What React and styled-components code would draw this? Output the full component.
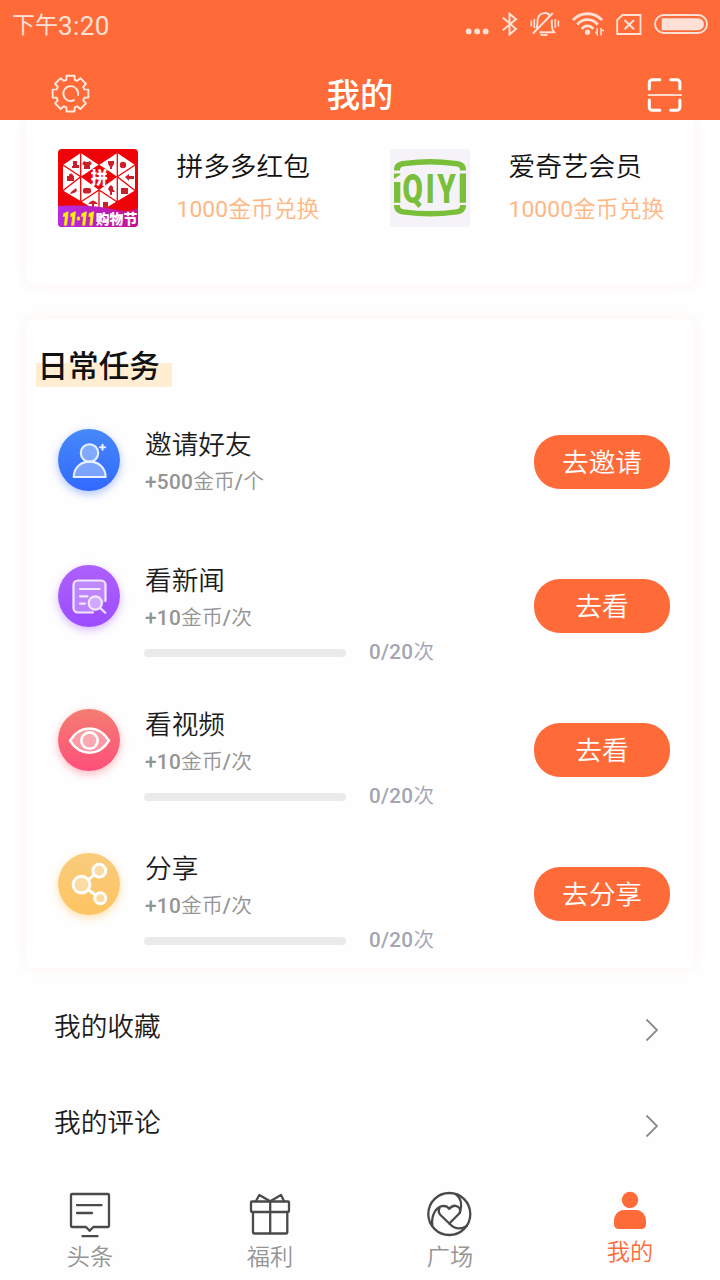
import React from 'react'
import styled, { createGlobalStyle } from 'styled-components'

const GlobalStyle = createGlobalStyle`
    * {
        box-sizing: border-box;
    }
    body {
        margin: 0;
        background: #fefefe;
        font-family: Roboto, 'Noto Sans CJK SC', sans-serif;
        font-weight: 350;
    }
`
const Page = styled.div`
    display: flex;
    flex-direction: column;
    width: 720px;
    height: 1280px;
    overflow: hidden;
`
const Header = styled.header`
    flex: none;
    height: 120px;
    background: #ff6b38;
    color: #fff;
    position: relative;
    z-index: 1;
`
const StatusBar = styled.div`
    display: flex;
    justify-content: space-between;
    height: 48px;
    padding: 12px 12px 0 12px;
    color: #ffe1d7;
`
const Clock = styled.div`
    display: flex;
    align-items: center;
    height: 28px;
    font-size: 26px;
    font-weight: 400;
    letter-spacing: 0.4px;
`
const ClockPeriod = styled.span`
    font-size: 23px;
    line-height: 26px;
    letter-spacing: 0;
`
const StatusIcons = styled.div`
    display: flex;
    gap: 12px;

    svg {
        display: block;
    }
`
const NavBar = styled.div`
    display: grid;
    grid-template-columns: 1fr auto 1fr;
    align-items: center;
    height: 72px;
    padding: 20px 37px 0 51px;

    svg {
        display: block;
    }
    svg:last-child {
        justify-self: end;
    }
`
const NavTitle = styled.h1`
    margin: 3px 0 0 -14px;
    font-size: 33.3px;
    line-height: 40px;
    font-weight: 500;
`
const Card = styled.section`
    flex: none;
    margin: 0 26px;
    border-radius: 8px;
    background: #fefefe;
    box-shadow: 0 0 12px rgba(255, 107, 56, 0.08);
`
const RewardCard = styled(Card)`
    display: grid;
    grid-template-columns: 332px 1fr;
    height: 165px;
    padding: 29px 0 0 32px;
    border-radius: 0 0 8px 8px;
`
const Reward = styled.div`
    display: flex;
    gap: 38.5px;

    svg {
        flex: none;
        display: block;
        border-radius: 4px;
    }
`
const RewardName = styled.div`
    margin-top: 1px;
    font-size: 26.7px;
    line-height: 34px;
    color: #111;
    white-space: nowrap;
`
const RewardCost = styled.div`
    margin-top: 9px;
    font-size: 22.8px;
    line-height: 34px;
    color: #ffb783;
    white-space: nowrap;
`
const CostDigits = styled.span`
    font-weight: 400;
    letter-spacing: 0.1px;
`
const TaskCard = styled(Card)`
    height: 649px;
    margin-top: 34px;
    padding: 27px 24px 0 10px;
`
const TaskHeading = styled.h2`
    width: 136px;
    height: 41px;
    margin: 0 0 42px;
    padding: 1px 0 0 1.5px;
    font-size: 30.6px;
    line-height: 40px;
    font-weight: 500;
    color: #111;
    white-space: nowrap;
    background: linear-gradient(#ffeed2, #ffeed2) 0 100% / 100% 24px no-repeat;
`
const TaskRow = styled.div`
    display: flex;
    align-items: flex-start;
    height: ${(props) => (props.$compact ? 136 : 144)}px;
    padding-left: 22px;
`
const TaskBadge = styled.div`
    flex: none;
    width: 62px;
    height: 62px;
    border-radius: 50%;
    background: linear-gradient(${(props) => props.$from}, ${(props) => props.$to});
    box-shadow: 0 3px 8px ${(props) => props.$glow};

    svg {
        display: block;
    }
`
const TaskInfo = styled.div`
    flex: 1;
    padding-left: 25px;
`
const TaskName = styled.div`
    padding-top: 1px;
    font-size: 26.7px;
    line-height: 30px;
    color: #1c1c1c;
`
const TaskReward = styled.div`
    margin-top: 7px;
    font-size: 20.8px;
    line-height: 30px;
    color: #949494;
`
const Digits = styled.span`
    font-weight: 500;
    letter-spacing: 0.3px;
`
const Progress = styled.div`
    display: flex;
    align-items: center;
    gap: 23px;
    height: 30px;
    margin: 5px 0 0 -1px;
`
const Track = styled.div`
    width: 202px;
    height: 8px;
    border-radius: 4px;
    background: #eaeaea;
    overflow: hidden;
`
const Fill = styled.div`
    height: 100%;
    background: #ff6b38;
`
const Count = styled.div`
    font-size: 20.6px;
    line-height: 30px;
    margin-top: -2px;
    color: #a3a6b1;
`
const TaskButton = styled.button`
    flex: none;
    width: 136px;
    height: 54px;
    margin: ${(props) => (props.$compact ? 6 : 14)}px 0 0;
    padding: 2px 0 0;
    border: 0;
    border-radius: 26px;
    background: #ff6b38;
    color: #fff;
    font: inherit;
    font-size: 26.7px;
    line-height: 52px;
`
const Links = styled.nav`
    flex: none;
    margin-top: 10px;
`
const LinkRow = styled.div`
    display: flex;
    justify-content: space-between;
    align-items: flex-start;
    height: 96px;
    padding: 31px 61px 0 54px;
    font-size: 26.7px;
    line-height: 36px;
    color: #1c1c1c;

    svg {
        display: block;
        margin-top: 9px;
    }
`
const TabBar = styled.footer`
    flex: none;
    display: grid;
    grid-template-columns: repeat(4, 1fr);
    margin-top: 20px;
`
const Tab = styled.div`
    display: flex;
    flex-direction: column;
    align-items: center;
    font-size: 23.2px;
    line-height: 30px;
    color: ${(props) => (props.$active ? '#ff6b38' : '#949494')};

    svg {
        display: block;
        margin-bottom: ${(props) => (props.$active ? -3 : 2)}px;
    }
`

const gearPath = () => {
  const points = []
  for (let i = 0; i < 8; i++) {
    const mid = i * 45 - 90
    const corners = [[-17, 14.4], [-12.5, 18.3], [12.5, 18.3], [17, 14.4]]
    corners.forEach(([angle, r]) => {
      const rad = ((mid + angle) * Math.PI) / 180
      points.push(`${(19.5 + r * Math.cos(rad)).toFixed(2)} ${(19.6 + r * Math.sin(rad)).toFixed(2)}`)
    })
  }
  return `M${points.join('L')}Z`
}

const GearIcon = () => (
  <svg width="40" height="40" viewBox="0 0 40 40" fill="none" stroke="#ffe9e1" strokeWidth="1.9" strokeLinejoin="round" strokeLinecap="round">
    <path d={gearPath()} />
    <path d="M27 21A7.400 7.400 0 1 0 23 26.200" />
  </svg>
)

const ScanIcon = () => (
  <svg width="36" height="36" viewBox="0 0 36 36" fill="none" stroke="#fff" strokeWidth="3" strokeLinecap="round">
    <path d="M2.300 13V6.800a3 3 0 0 1 3-3H12.800M23.800 3.800h6.100a3 3 0 0 1 3 3V13M32.900 24v7.300a3 3 0 0 1-3 3H23.800M12.800 34.300H5.300a3 3 0 0 1-3-3V24" />
    <path d="M.8 19h34" strokeWidth="2" strokeLinecap="butt" opacity="0.75" />
  </svg>
)

const DotsIcon = () => (
  <svg width="25" height="24" fill="currentColor">
    <circle cx="3.7" cy="19.4" r="2.9" />
    <circle cx="12.2" cy="19.4" r="2.9" />
    <circle cx="20.7" cy="19.4" r="2.9" />
  </svg>
)

const BluetoothIcon = () => (
  <svg width="16" height="24" fill="none" stroke="currentColor" strokeWidth="2">
    <path d="M.8 5.500L14 17 7.500 22.500V1.800L14 7.200.8 18.300" />
  </svg>
)

const MutedBellIcon = () => (
  <svg width="30" height="24" fill="none" stroke="currentColor" strokeWidth="1.9">
    <path d="M6 16.500C7.200 15 7.500 13.500 7.500 9.500C7.500 -.5 17.500 -.5 20 4M21.800 7.500V13C21.800 17 22.500 18.500 24 20.200H9.500" />
    <path d="M3 21.500L22.800 1" />
    <path d="M10.500 22.400q3.500 1.600 7 0" />
    <path d="M1.300 8.500v6M4.300 7v9M25.300 7v9M28.400 8.500v6" strokeWidth="1.6" />
  </svg>
)

const WifiIcon = () => (
  <svg width="32" height="24" fill="none" stroke="currentColor" strokeWidth="2.8">
    <path d="M1 8.200C8.500-.400 22.500-.400 30 8.200" />
    <path d="M5.300 12.500C11 6 20 6 25.700 12.500" />
    <path d="M9.800 16.800C13 13 18 13 21.200 16.800" />
    <circle cx="15.5" cy="20.2" r="2.6" fill="currentColor" stroke="none" />
    <path d="M25.200 16v7.500M29 16v7.500M23 20.500h2.500M29 18.500h3" strokeWidth="1.5" />
  </svg>
)

const SimIcon = () => (
  <svg width="26" height="24" fill="none" stroke="currentColor" strokeWidth="1.8">
    <path d="M6.500 3H24.500V22H1.200V8Z" />
    <path d="M8.500 8l9.500 9.200M18 8l-9.500 9.200" strokeWidth="2" />
  </svg>
)

const BatteryIcon = () => (
  <svg width="54" height="24">
    <rect x="1" y="3" width="52" height="18" rx="9" fill="none" stroke="currentColor" strokeWidth="1.9" />
    <path d="M7.700 6.200H44a6 6 0 0 1 0 12H7.700Z" fill="currentColor" />
  </svg>
)

const PddLogo = () => (
  <svg width="80" height="78" viewBox="0 0 80 78">
    <defs>
      <linearGradient id="pddBand" x1="0" x2="1">
        <stop offset="0" stopColor="#b52be6" />
        <stop offset="1" stopColor="#c6128f" />
      </linearGradient>
    </defs>
    <rect width="80" height="78" fill="#ee0408" />
    <path d="M22.700 4L41 16 59.300 4 77 16V41.500L41 63 5 41.500V16Z" fill="#fff" />
    <path d="M22.700 27.700L41 15.500 59.300 27.700 41 41Z" fill="#ee0408" />
    <g stroke="#ee0408" strokeWidth="1.3" fill="none">
      <path d="M22.700 3V53M59.300 3V53M5 16l17.700 11.700L5 41.500M77 16L59.300 27.700 77 41.500M22.700 53L41 41l18.300 12M41 41v22" />
    </g>
    <g fill="#c9202a">
      <path d="M15 12h4v4h2v3h-7v-2h1zM26 12l2 1h2l2-1 2 3-2 1v4h-6v-4l-2-1zM50 12h6v3l-2 3v2h-2v-2l-2-3zM67 28l4-3v2h5v3h-5v2zM51 38l2-2 2 2v2l2 3h-3v3h-2v-3l-2-3zM63 39h7v6h-7zM13 43l5-4 1 3-3 2-4 1zM9 27h7v5H9zM30 55q5-7 10 0h-4v4h-2v-4zM45 53h5v6h-5z" />
      <circle cx="65" cy="16" r="3.2" />
      <rect x="25" y="39" width="8" height="5.5" rx="2" />
      <rect x="11" y="24.5" width="4" height="4" rx="2" />
    </g>
    <text x="41.3" y="34.8" textAnchor="middle" fontSize="17" fontWeight="900" fontFamily="'Noto Sans CJK SC', sans-serif" fill="#fff">拼</text>
    <path d="M0 57Q34 55 54 60T80 58V78H0Z" fill="url(#pddBand)" />
    <text transform="translate(4 75.500) scale(.67 1)" fontSize="19" fontWeight="900" fontStyle="italic" fill="#fff200" stroke="#fff200" strokeWidth="1">11·11</text>
    <text x="37.8" y="74.8" fontSize="13.8" fontWeight="900" fontFamily="'Noto Sans CJK SC', sans-serif" fill="#fff">购物节</text>
  </svg>
)

const IqiyiLogo = () => (
  <svg width="80" height="78" viewBox="0 0 80 78">
    <rect width="80" height="78" fill="#f5f3f7" />
    <g fill="#7abf3a">
      <path d="M4 21.500C4 14 8 12.500 15 11.700Q40 8.500 65 11.700C72 12.500 76 14 76 21.500H70C70 18.500 69 17.800 65 17.200Q40 14 15 17.200C11 17.800 10 18.500 10 21.500Z" />
      <path d="M4 56C4 63 8 65 15 65.800Q40 69 65 65.800C72 65 76 63 76 56H70C70 59 69 60 65 60.500Q40 63.500 15 60.500C11 60 10 59 10 56Z" />
      <path d="M4 24.500h6.300v1.500Q7 27.500 4 30zM4 33h6.300v20.800H4zM69.700 24.500H76V53.800h-6.300z" />
      <text transform="translate(12.500 53.500) scale(.72 1)" fontSize="41" fontWeight="900" fontFamily="Roboto, sans-serif" letterSpacing="4">QIY</text>
    </g>
  </svg>
)

const lineProps = {
  width: 62,
  height: 62,
  fill: 'none',
  stroke: '#fff',
  strokeLinecap: 'round',
  strokeLinejoin: 'round',
}

const InviteIcon = () => (
  <svg {...lineProps} strokeWidth="2.1" stroke="#e9f0ff">
    <circle cx="31.5" cy="24" r="8.7" fill="rgba(255,255,255,.35)" />
    <path d="M15.700 48C16 27.500 47.400 27.500 47.700 48Z" fill="rgba(255,255,255,.35)" />
    <path d="M44.500 15.800v5M42 18.300h5" />
  </svg>
)

const NewsIcon = () => (
  <svg {...lineProps} strokeWidth="2.2" stroke="#f3e6ff">
    <path d="M47.500 36V20a4.500 4.500 0 0 0-4.500-4.500H20a4.500 4.500 0 0 0-4.500 4.500V43a4.500 4.500 0 0 0 4.500 4.500H35" fill="rgba(255,255,255,.28)" />
    <path d="M22 24h19.500M22 31.300h7.500M22 38.600h5" />
    <circle cx="37.3" cy="38" r="6.6" fill="rgba(255,255,255,.3)" />
    <path d="M42.500 43.200L47.300 47.700" />
  </svg>
)

const EyeIcon = () => (
  <svg {...lineProps} strokeWidth="2.6">
    <path d="M12 31.600C22 15.500 41 15.500 51 31.600 41 47.700 22 47.700 12 31.600Z" fill="rgba(255,255,255,.35)" />
    <circle cx="31.5" cy="31.6" r="8.2" fill="rgba(255,255,255,.15)" />
  </svg>
)

const ShareIcon = () => (
  <svg {...lineProps} strokeWidth="2.9">
    <g fill="rgba(255,255,255,.35)">
      <circle cx="23.5" cy="31.6" r="8.4" />
      <circle cx="41.3" cy="17.7" r="6.4" />
      <circle cx="42.3" cy="45.3" r="5.5" />
    </g>
    <path d="M30.500 26.500L36 22M30.500 37L37.500 42" />
  </svg>
)

const Chevron = () => (
  <svg width="14" height="24" fill="none" stroke="#8c8c8c" strokeWidth="1.8">
    <path d="M1.500 1.500L12 12 1.500 22.500" />
  </svg>
)

const tabProps = {
  width: 48,
  height: 50,
  fill: 'none',
  stroke: '#4a4a4a',
  strokeWidth: 2.3,
  strokeLinecap: 'round',
  strokeLinejoin: 'round',
}

const HeadlineIcon = () => (
  <svg {...tabProps}>
    <path d="M6 4H42a1 1 0 0 1 1 1V36a1 1 0 0 1-1 1H27.300L23.700 40.800 20 37H6a1 1 0 0 1-1-1V5a1 1 0 0 1 1-1Z" />
    <path d="M11 15.200H35.500M11 23H26M16.500 46.200H31.500" />
  </svg>
)

const GiftIcon = () => (
  <svg {...tabProps}>
    <rect x="5" y="11.5" width="38" height="10.5" rx="1" />
    <path d="M7 22V42.500a1 1 0 0 0 1 1H40.300a1 1 0 0 0 1-1V22M24.200 11.500V43.500" />
    <path d="M10 11L13.300 5 24.200 11.200 35 5 38 11" />
  </svg>
)

const SquareIcon = () => (
  <svg {...tabProps}>
    <circle cx="23.3" cy="24" r="21" />
    <path d="M6.300 35.500C5 25 10.500 16 17.500 15.800 20.500 15.800 22 17 23.300 18.800 25 16.500 27.500 15.600 29.700 15.800 33.500 16.500 35.500 20 33.500 23.300L23.300 33.500 14.500 25C12.700 23 12.300 20.500 13.500 18.200" />
    <path d="M30 4.300C35 8 36.500 15 33.800 22.500M23.300 33.500C28.500 39 35 39.500 40.800 36" />
  </svg>
)

const ProfileIcon = () => (
  <svg width="48" height="50" fill="#ff6b38">
    <circle cx="24" cy="10" r="8.2" />
    <path d="M18 20H30C36 20 40 25 40 31V34.500a4.500 4.500 0 0 1-4.500 4.500H12.500A4.500 4.500 0 0 1 8 34.500V31C8 25 12 20 18 20Z" />
  </svg>
)

const rewards = [
  { name: '拼多多红包', cost: 1000, Logo: PddLogo },
  { name: '爱奇艺会员', cost: 10000, Logo: IqiyiLogo },
]

const tasks = [
  { name: '邀请好友', amount: 500, per: '个', action: '去邀请', Icon: InviteIcon, from: '#4688f8', to: '#3169ff', glow: 'rgba(49,105,255,.4)' },
  { name: '看新闻', amount: 10, per: '次', action: '去看', done: 0, total: 20, Icon: NewsIcon, from: '#ad60fc', to: '#9c4dff', glow: 'rgba(156,77,255,.4)' },
  { name: '看视频', amount: 10, per: '次', action: '去看', done: 0, total: 20, Icon: EyeIcon, from: '#f47d70', to: '#ff4f7b', glow: 'rgba(255,79,100,.4)' },
  { name: '分享', amount: 10, per: '次', action: '去分享', done: 0, total: 20, Icon: ShareIcon, from: '#f9cc7d', to: '#ffc462', glow: 'rgba(255,190,80,.45)' },
]

const tabs = [
  { label: '头条', Icon: HeadlineIcon },
  { label: '福利', Icon: GiftIcon },
  { label: '广场', Icon: SquareIcon },
  { label: '我的', Icon: ProfileIcon, active: true },
]

const Task = ({ task }) => {
  const { Icon } = task
  const compact = task.total === undefined
  return (
    <TaskRow $compact={compact}>
        <TaskBadge $from={task.from} $to={task.to} $glow={task.glow}>
            <Icon />
        </TaskBadge>
        <TaskInfo>
            <TaskName>{task.name}</TaskName>
            <TaskReward><Digits>+{task.amount}</Digits>金币<Digits>/</Digits>{task.per}</TaskReward>
            {!compact && (
                <Progress>
                    <Track>
                        <Fill style={{ width: `${(task.done / task.total) * 100}%` }} />
                    </Track>
                    <Count><Digits>{task.done}/{task.total}</Digits>次</Count>
                </Progress>
            )}
        </TaskInfo>
        <TaskButton $compact={compact}>{task.action}</TaskButton>
    </TaskRow>
  )
}

const App = () => {
  return (
    <Page>
        <GlobalStyle />
        <Header>
            <StatusBar>
                <Clock><ClockPeriod>下午</ClockPeriod>3:20</Clock>
                <StatusIcons>
                    <DotsIcon />
                    <BluetoothIcon />
                    <MutedBellIcon />
                    <WifiIcon />
                    <SimIcon />
                    <BatteryIcon />
                </StatusIcons>
            </StatusBar>
            <NavBar>
                <GearIcon />
                <NavTitle>我的</NavTitle>
                <ScanIcon />
            </NavBar>
        </Header>
        <RewardCard>
            {rewards.map(({ name, cost, Logo }) => (
                <Reward key={name}>
                    <Logo />
                    <div>
                        <RewardName>{name}</RewardName>
                        <RewardCost><CostDigits>{cost}</CostDigits>金币兑换</RewardCost>
                    </div>
                </Reward>
            ))}
        </RewardCard>
        <TaskCard>
            <TaskHeading>日常任务</TaskHeading>
            {tasks.map((task) => (
                <Task key={task.name} task={task} />
            ))}
        </TaskCard>
        <Links>
            <LinkRow>我的收藏<Chevron /></LinkRow>
            <LinkRow>我的评论<Chevron /></LinkRow>
        </Links>
        <TabBar>
            {tabs.map(({ label, Icon, active }) => (
                <Tab key={label} $active={active}>
                    <Icon />
                    {label}
                </Tab>
            ))}
        </TabBar>
    </Page>
  )
}

export default App
